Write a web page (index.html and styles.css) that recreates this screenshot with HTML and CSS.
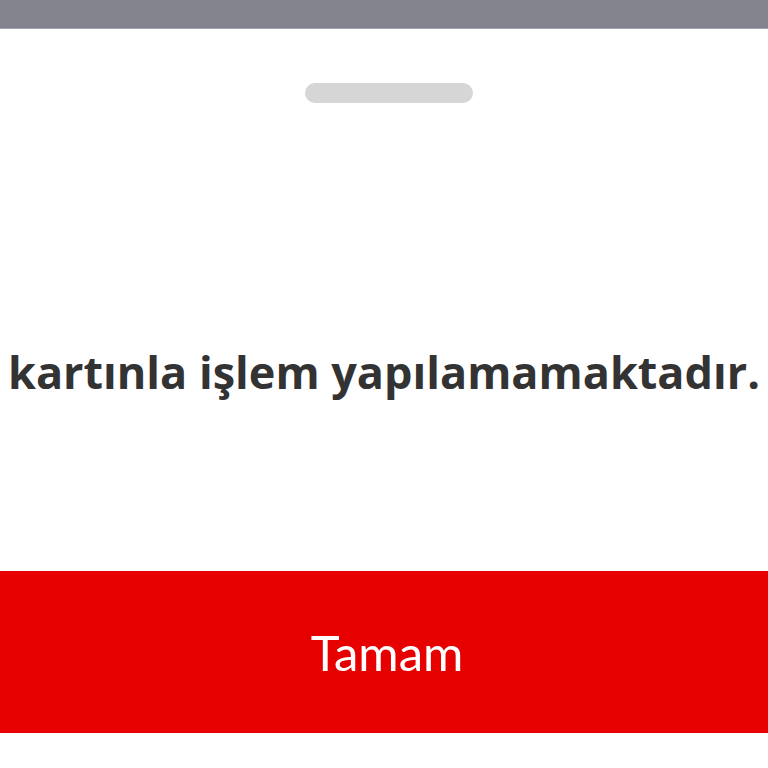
FILE: index.html
```html
<!DOCTYPE html>
<html lang="tr">
<head>
<meta charset="utf-8">
<link rel="stylesheet" href="styles.css">
</head>
<body>
<div class="topbar"></div>
<div class="sheet">
  <div class="handle"></div>
  <p class="message">kartınla işlem yapılamamaktadır.</p>
  <button class="ok">Tamam</button>
</div>
</body>
</html>
```
FILE: styles.css
```css
html, body {
  margin: 0;
  padding: 0;
  background: #ffffff;
  width: 768px;
  height: 768px;
  overflow: hidden;
}
.topbar {
  height: 29px;
  background: #83838e;
  border-bottom: 1px solid #a2a2ac;
  box-sizing: border-box;
}
.sheet {
  display: flex;
  flex-direction: column;
  align-items: center;
}
.handle {
  margin-top: 54px;
  margin-left: 10px;
  width: 168px;
  height: 20px;
  border-radius: 10px;
  background: #d6d6d6;
}
.message {
  margin: 0;
  margin-top: 239px;
  font-family: "Open Sans", sans-serif;
  font-weight: 700;
  font-size: 45px;
  line-height: 60px;
  color: #333333;
  white-space: nowrap;
}
.ok {
  margin-top: 169px;
  width: 100%;
  height: 162px;
  border: none;
  background: #e60000;
  color: #ffffff;
  font-family: Lato, sans-serif;
  font-size: 49px;
  padding: 0 0 0 6px;
}
```
